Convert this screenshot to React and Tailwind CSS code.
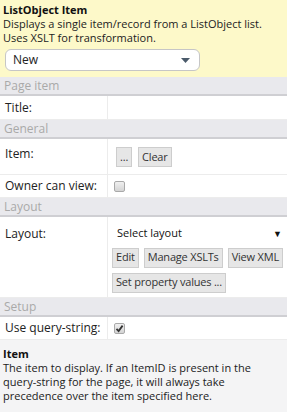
import React from "react";

function SectionHeader({ title }) {
  return (
    <div className="h-[19px] bg-[#e9e9ed] border-b-2 border-[#cfcfd3] px-[4px] text-[12px] leading-[17px] text-[#a9a9a9]">
      {title}
    </div>
  );
}

function Row({ label, className = "", labelClass = "", children }) {
  return (
    <div className={"grid grid-cols-[108px_1fr] bg-white border-b border-[#ececec] " + className}>
      <div className={"px-[5px] border-r border-[#ececec] text-[12px] text-[#222] whitespace-nowrap " + labelClass}>{label}</div>
      <div className="pl-[4px] pr-[2px]">{children}</div>
    </div>
  );
}

function Btn({ children, className = "" }) {
  return (
    <span className={"inline-flex shrink-0 whitespace-nowrap items-center h-[20px] px-[3px] bg-[#e6e6e6] border border-[#cdcdcd] text-[11px] tracking-[-0.2px] text-[#333] " + className}>
      {children}
    </span>
  );
}

function Check({ checked }) {
  return (
    <span className="flex items-center justify-center w-[11px] h-[11px] rounded-[2px] border border-[#a9a9a9] bg-gradient-to-b from-[#f0f0f0] to-[#d4d4d4]">
      {checked && (
        <svg width="9" height="9" viewBox="0 0 9 9">
          <path d="M1.5 4.8 L3.6 7 L7.6 1.6" fill="none" stroke="#333" strokeWidth="1.8" />
        </svg>
      )}
    </span>
  );
}

export default function App() {
  return (
    <div className="w-[287px] h-[412px] overflow-hidden bg-[#f4f4f5] font-['Open_Sans',sans-serif]">
      <div className="h-[77px] bg-[#fdf9c9] px-[3px] pt-[2px]">
        <div className="text-[11px] font-bold leading-[15px] text-[#111]">ListObject Item</div>
        <div className="text-[11px] leading-[14px] text-[#222]">
          Displays a single item/record from a ListObject list.<br />Uses XSLT for transformation.
        </div>
        <div className="mt-[4px] ml-[2px] w-[195px] h-[22px] rounded-[6px] border border-[#c6c6c6] bg-white flex items-center justify-between pl-[7px] pr-[9px] text-[12px] text-[#222]">
          <span>New</span>
          <svg width="9" height="5" viewBox="0 0 9 5"><path d="M0 0 L9 0 L4.5 5 Z" fill="#4a5a6a" /></svg>
        </div>
      </div>

      <SectionHeader title="Page item" />
      <Row label="Title:" className="h-[24px]" labelClass="leading-[23px]" />

      <SectionHeader title="General" />
      <Row label="Item:" className="h-[36px]" labelClass="pt-[6px]">
        <div className="flex gap-[6px] pt-[8px] pl-[4px]">
          <Btn>...</Btn>
          <Btn>Clear</Btn>
        </div>
      </Row>
      <Row label="Owner can view:" className="h-[23px]" labelClass="leading-[22px]">
        <div className="flex items-center h-[22px] pl-[2px]"><Check /></div>
      </Row>

      <SectionHeader title="Layout" />
      <Row label="Layout:" className="h-[81px]" labelClass="pt-[8px]">
        <div className="flex items-center justify-between pt-[8px] pl-[5px] pr-[3px] text-[11px] text-[#111]">
          <span>Select layout</span>
          <span className="text-[9px]">▼</span>
        </div>
        <div className="flex gap-[5px] mt-[6px]">
          <Btn>Edit</Btn>
          <Btn>Manage XSLTs</Btn>
          <Btn>View XML</Btn>
        </div>
        <div className="flex mt-[5px]">
          <Btn>Set property values ...</Btn>
        </div>
      </Row>

      <SectionHeader title="Setup" />
      <Row label="Use query-string:" className="h-[23px]" labelClass="leading-[22px]">
        <div className="flex items-center h-[22px] pl-[2px]"><Check checked /></div>
      </Row>

      <div className="px-[3px] pt-[7px] text-[11px] leading-[14px] text-[#222]">
        <div className="font-bold text-[#111]">Item</div>
        <div>
          The item to display. If an ItemID is present in the query-string for the page, it will always take precedence over the item specified here.
        </div>
      </div>
    </div>
  );
}
